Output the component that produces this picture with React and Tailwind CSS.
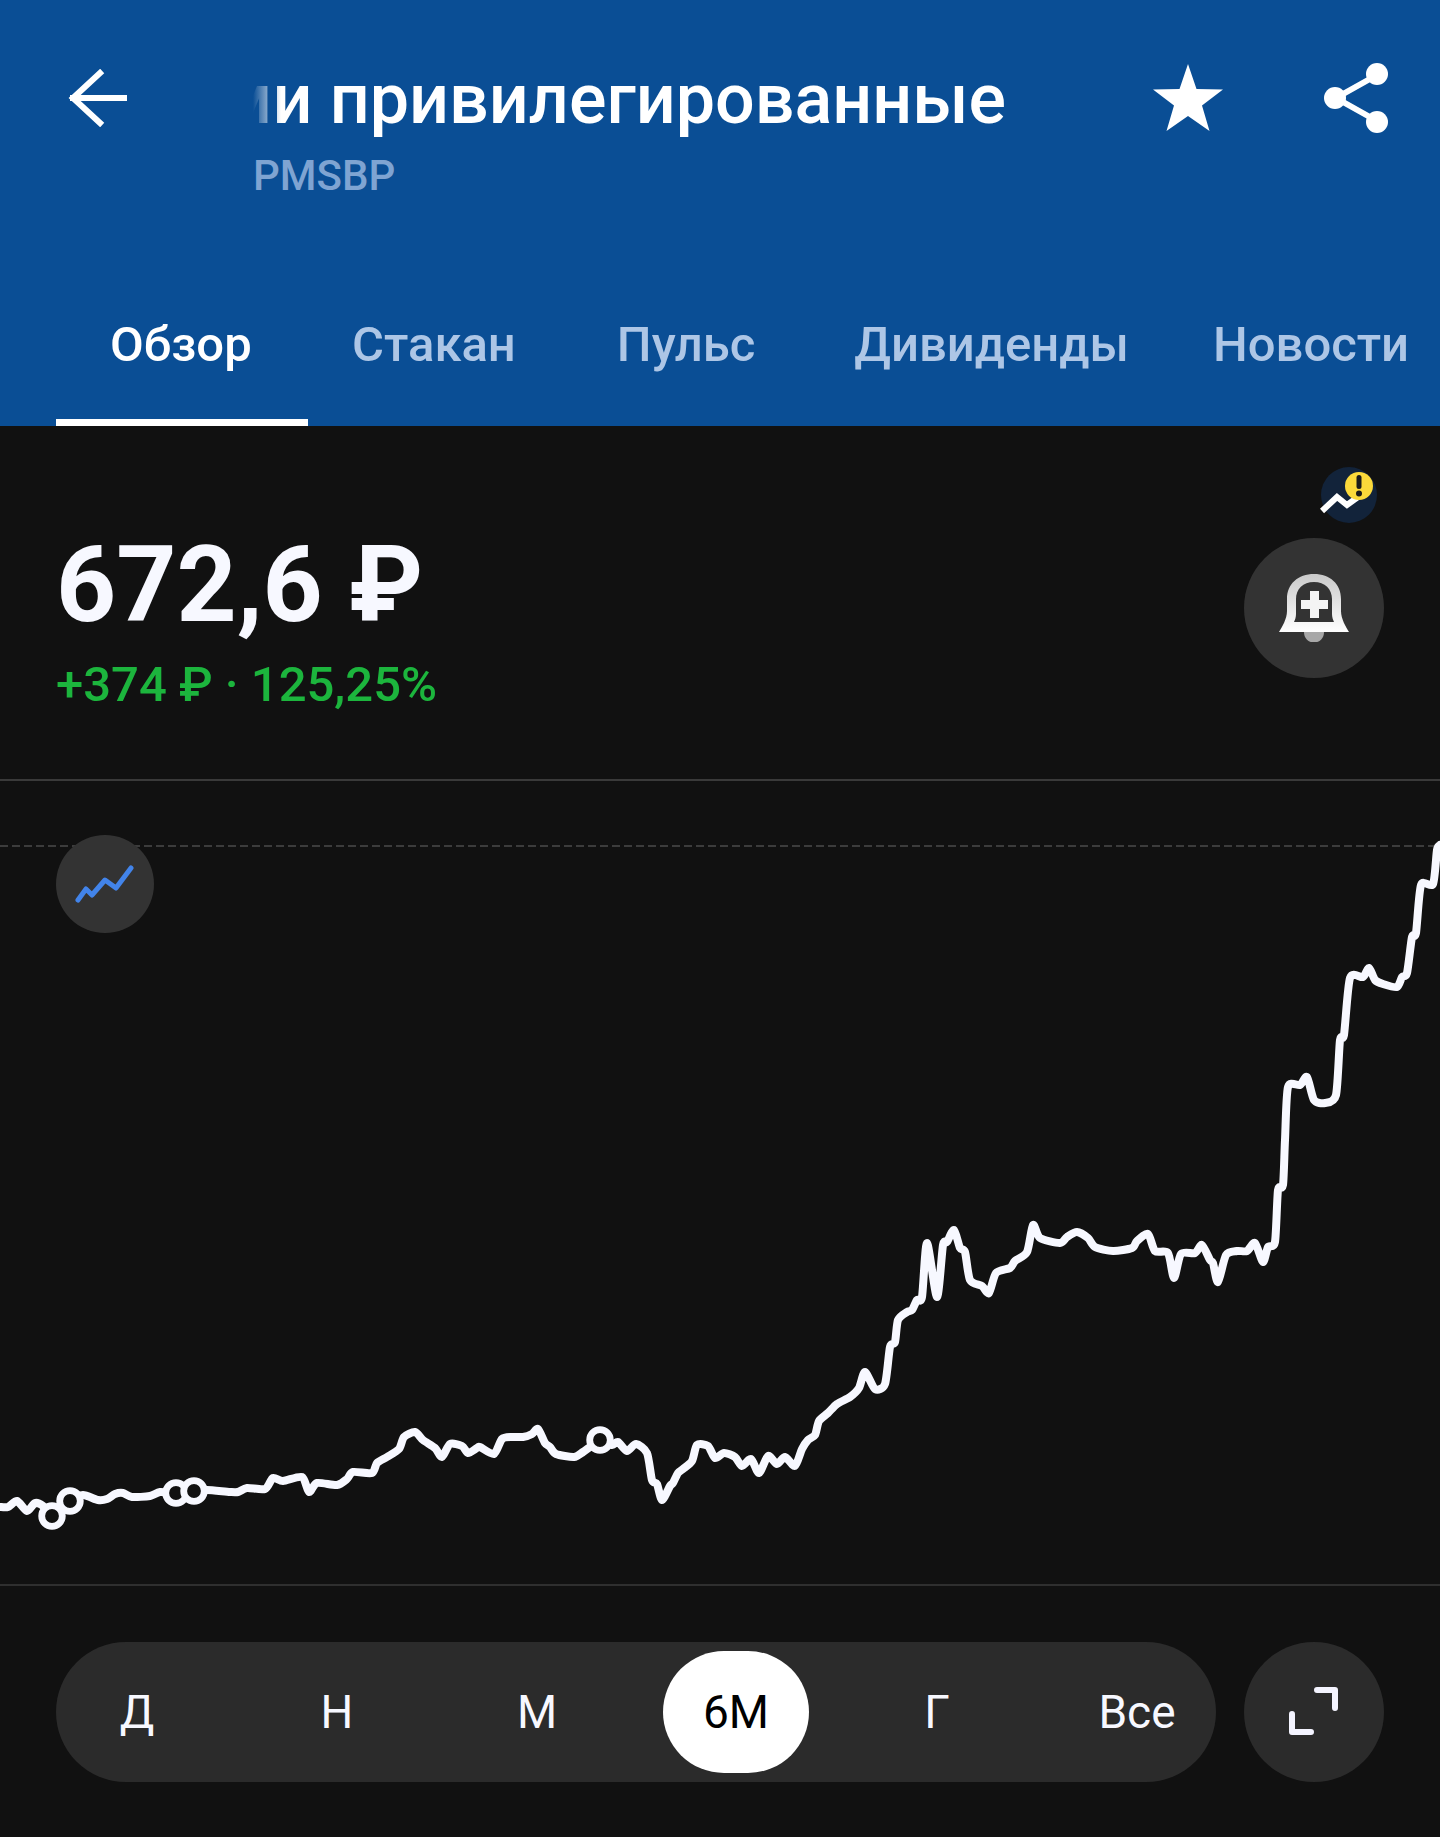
const linePts = "0,1507 8,1507 17,1501 27,1511 35,1503 43,1506 52,1516 70,1501 83,1495 98,1500 107,1499 115,1494 123,1493 132,1497 150,1496 160,1492 176,1493 194,1491 207,1490 230,1492 238,1492 247,1488 265,1489 273,1478 283,1481 302,1477 309,1492 317,1483 337,1485 347,1479 353,1472 372,1473 377,1463 387,1457 399,1449 404,1437 415,1432 423,1440 435,1448 442,1457 450,1444 462,1446 468,1453 477,1448 480,1447 494,1454 502,1439 512,1437 523,1437 532,1434 538,1429 545,1443 550,1447 556,1454 574,1457 583,1452 590,1447 600,1440 612,1445 618,1442 627,1451 636,1444 647,1453 652,1480 657,1484 662,1500 670,1486 673,1483 678,1473 683,1469 692,1461 697,1445 708,1446 715,1458 724,1453 735,1457 742,1466 751,1459 759,1473 768,1456 777,1464 785,1457 795,1466 802,1449 808,1440 815,1435 819,1421 828,1413 837,1404 850,1397 859,1388 865,1372 875,1389 885,1384 890,1347 895,1342 898,1320 907,1312 912,1310 917,1300 922,1297 927,1243 937,1297 943,1245 947,1242 954,1230 960,1248 965,1252 970,1280 982,1286 989,1293 996,1273 1010,1268 1015,1261 1027,1252 1033,1225 1040,1238 1060,1243 1067,1237 1077,1232 1088,1238 1095,1247 1113,1251 1132,1248 1137,1241 1148,1234 1155,1251 1168,1253 1174,1278 1181,1254 1195,1253 1202,1245 1210,1260 1213,1263 1218,1282 1226,1255 1237,1251 1247,1251 1255,1243 1263,1262 1268,1247 1275,1242 1278,1190 1283,1185 1285,1140 1288,1087 1300,1085 1307,1077 1314,1100 1325,1103 1336,1095 1340,1040 1344,1035 1350,978 1363,977 1369,968 1375,980 1383,984 1397,987 1402,977 1407,973 1412,937 1416,933 1421,885 1433,884 1437,850 1440,845";

const smoothPath = (str) => {
  const p = str.split(" ").map((s) => s.split(",").map(Number));
  let d = `M${p[0][0]} ${p[0][1]}`;
  for (let i = 0; i < p.length - 1; i++) {
    const a = p[Math.max(i - 1, 0)];
    const b = p[i];
    const c = p[i + 1];
    const e = p[Math.min(i + 2, p.length - 1)];
    const c1x = b[0] + (c[0] - a[0]) / 8;
    const c1y = b[1] + (c[1] - a[1]) / 8;
    const c2x = c[0] - (e[0] - b[0]) / 8;
    const c2y = c[1] - (e[1] - b[1]) / 8;
    d += ` C${c1x} ${c1y} ${c2x} ${c2y} ${c[0]} ${c[1]}`;
  }
  return d;
};

const markers = [[52, 1516], [70, 1501], [176, 1493], [194, 1491], [600, 1440]];
const ranges = ["Д", "Н", "М", "6М", "Г", "Все"];

function Tab({ label, active, className }) {
  return (
    <div className={`flex h-full items-center whitespace-nowrap ${className} ${active ? "border-b-[7px] border-white text-white" : "border-b-[7px] border-transparent text-[#adc6e6]"}`}>
      {label}
    </div>
  );
}

export default function App() {
  return (
    <div className="h-[1837px] w-[1440px] overflow-hidden bg-[#111111] [font-family:Roboto,sans-serif]">
      <header className="flex h-[426px] flex-col bg-[#0a4e95] text-white">
        <div className="flex h-[269px] items-start">
          <svg className="ml-[68px] mt-[69px] shrink-0" width="60" height="58" viewBox="68 69 60 58" fill="none" stroke="#fff" strokeWidth="6" strokeLinecap="square">
            <path d="M100 73 L73 98 L100 123" strokeLinejoin="miter" />
            <path d="M73 98 H124" />
          </svg>
          <div className="ml-[125px] w-[753px] shrink-0 pt-[61px]">
            <div className="relative flex h-[76px] items-center justify-end overflow-hidden">
              <span className="whitespace-nowrap text-[70px] font-medium leading-[76px]">ми привилегированные</span>
              <div className="absolute inset-y-0 left-0 w-[28px] bg-gradient-to-r from-[#0a4e95] to-transparent" />
            </div>
            <div className="mt-[14px] text-[42px] font-medium leading-[50px] text-[#7fa4d2]">PMSBP</div>
          </div>
          <svg className="ml-[147px] mt-[64px] shrink-0" width="70" height="67" viewBox="0 0 70 67" fill="#fff">
            <path d="M35 0 L43.5 25 L70 25.500 L49 41.500 L56.500 67 L35 52 L13.500 67 L21 41.500 L0 25.500 L26.500 25 Z" />
          </svg>
          <svg className="ml-[101px] mt-[63px] shrink-0" width="64" height="70" viewBox="1324 63 64 70" fill="#fff" stroke="#fff">
            <path d="M1377 75 L1336 98 L1377 121" fill="none" strokeWidth="6" />
            <circle cx="1377" cy="74" r="11" stroke="none" />
            <circle cx="1335" cy="98" r="11" stroke="none" />
            <circle cx="1377" cy="122" r="11" stroke="none" />
          </svg>
        </div>
        <nav className="flex h-[157px] text-[49px] font-medium leading-none">
          <Tab label="Обзор" active className="ml-[56px] w-[252px] pl-[54px]" />
          <Tab label="Стакан" className="ml-[44px]" />
          <Tab label="Пульс" className="ml-[101px]" />
          <Tab label="Дивиденды" className="ml-[99px]" />
          <Tab label="Новости" className="ml-[84px]" />
        </nav>
      </header>

      <section className="flex h-[355px] justify-between border-b-2 border-[#3a3a3a] pl-[56px] pr-[56px]">
        <div className="pt-[100px]">
          <div className="text-[105px] font-bold leading-[120px] text-[#f7f8ff]">672,6 ₽</div>
          <div className="mt-[12px] text-[49px] font-medium leading-[54px] text-[#1cb53d]">+374 ₽ · 125,25%</div>
        </div>
        <div className="flex flex-col items-end pt-[41px]">
          <svg className="mr-[6px]" width="58" height="58" viewBox="1320 467 58 58">
            <circle cx="1349" cy="495" r="28" fill="#12233a" />
            <path d="M1322 511 L1337 497 L1347 505 L1358 497" fill="none" stroke="#fff" strokeWidth="6" />
            <circle cx="1359" cy="486" r="14" fill="#fbd93a" />
            <rect x="1356.500" y="475" width="5" height="14" rx="2.500" fill="#1a1a1a" />
            <circle cx="1359" cy="493.500" r="3" fill="#1a1a1a" />
          </svg>
          <div className="mt-[13px] flex h-[140px] w-[140px] items-center justify-center rounded-full bg-[#333333]">
            <svg width="70" height="68" viewBox="1279 575 70 68">
              <defs>
                <linearGradient id="bellFill" x1="0" y1="0" x2="0" y2="1">
                  <stop offset="0" stopColor="#c9c9c9" />
                  <stop offset="1" stopColor="#ffffff" />
                </linearGradient>
              </defs>
              <path d="M1304 633 H1324 C1324 647 1304 647 1304 633 Z" fill="#a8a8a8" />
              <path fillRule="evenodd" d="M1314 575 C1330 575 1341 585 1341 600 V612 C1341 620 1346 628 1349 633 H1279 C1282 628 1287 620 1287 612 V600 C1287 585 1298 575 1314 575 Z M1314 583 C1303 583 1296 590 1296 600 V615 C1296 618 1295 621 1294 623 H1334 C1333 621 1332 618 1332 615 V600 C1332 590 1325 583 1314 583 Z" fill="url(#bellFill)" />
              <path d="M1310 592 H1319 V601 H1328 V610 H1319 V619 H1310 V610 H1301 V601 H1310 Z" fill="#f4f4f4" />
            </svg>
          </div>
        </div>
      </section>

      <section className="relative h-[805px] border-b-2 border-[#2f2f2f]">
        <svg className="block" width="1440" height="803" viewBox="0 781 1440 803" fill="none">
          <line x1="0" y1="846" x2="1440" y2="846" stroke="#3c3c3c" strokeWidth="2" strokeDasharray="8 4" />
          <path d={smoothPath(linePts)} stroke="#f7f8ff" strokeWidth="8" strokeLinejoin="round" strokeLinecap="round" />
          {markers.map(([x, y]) => (
            <circle key={x} cx={x} cy={y} r="10.300" fill="#111111" stroke="#f7f8ff" strokeWidth="6.800" />
          ))}
        </svg>
        <div className="absolute left-[56px] top-[54px] flex h-[98px] w-[98px] items-center justify-center rounded-full bg-[#333333]">
          <svg width="60" height="40" viewBox="74 862 60 40" fill="none" stroke="#4284ea" strokeWidth="5" strokeLinecap="round" strokeLinejoin="round">
            <path d="M77 898 L85 887 L91 893 L104 878 L115 886 L130 866" />
          </svg>
        </div>
      </section>

      <footer className="flex gap-[28px] px-[56px] pt-[56px]">
        <div className="flex h-[140px] w-[1160px] shrink-0 items-center gap-[54px] rounded-full bg-[#2b2b2b] pl-[7px]">
          {ranges.map((r) => (
            <div
              key={r}
              className={`flex h-[122px] w-[146px] shrink-0 items-center justify-center rounded-full text-[46px] leading-none ${r === "6М" ? "bg-white text-black" : "pl-[2px] text-[#f7f8ff]"}`}
            >
              {r}
            </div>
          ))}
        </div>
        <div className="flex h-[140px] w-[140px] shrink-0 items-center justify-center rounded-full bg-[#2b2b2b]">
          <svg width="56" height="56" viewBox="1286 1685 56 56" fill="none" stroke="#f4f4ff" strokeWidth="6" strokeLinecap="round" strokeLinejoin="round">
            <path d="M1317 1691 H1335 V1709" />
            <path d="M1292 1715 V1733 H1311" />
          </svg>
        </div>
      </footer>
    </div>
  );
}
